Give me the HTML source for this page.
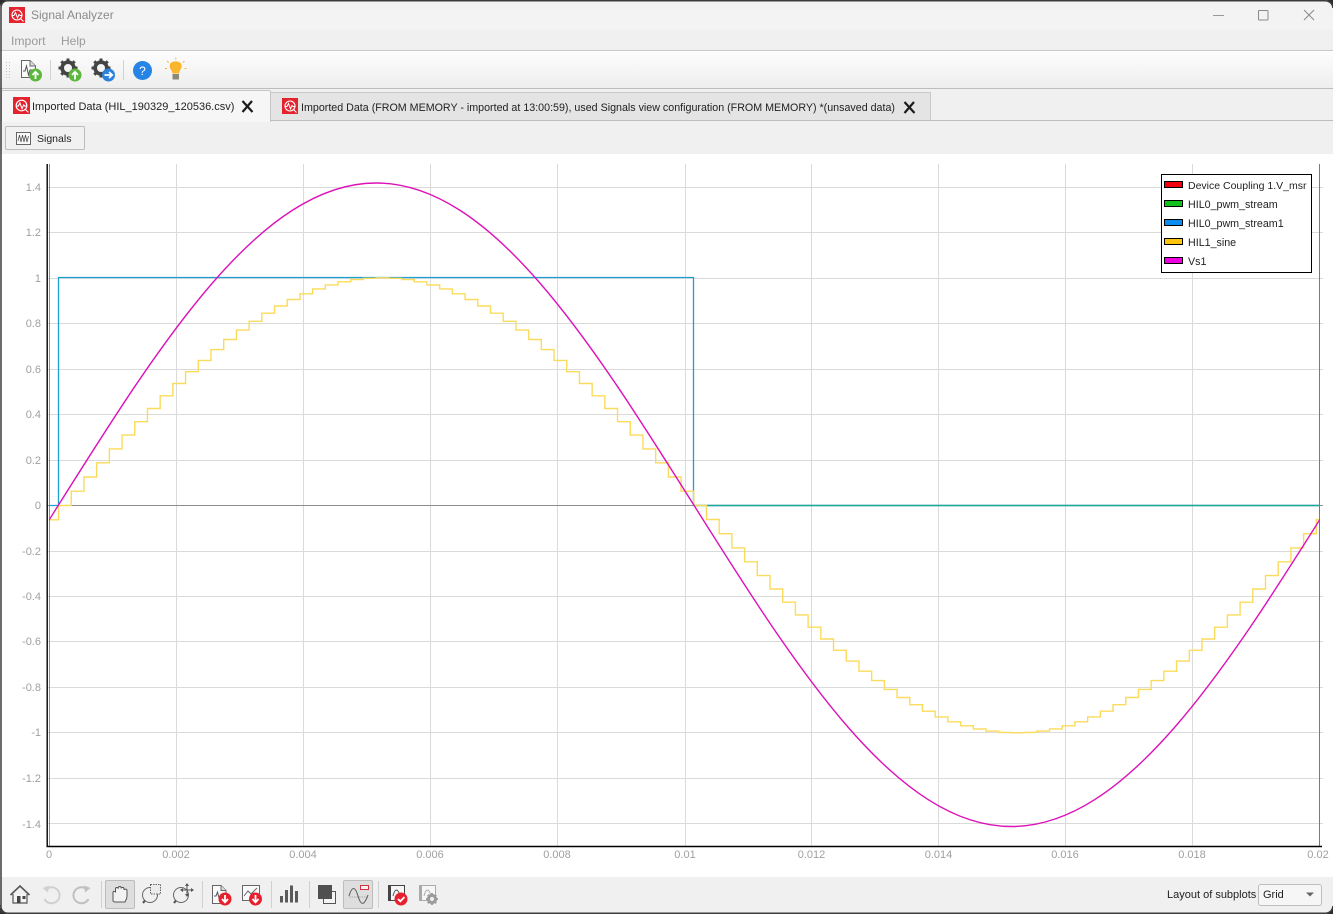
<!DOCTYPE html>
<html lang="en">
<head>
<meta charset="utf-8">
<title>Signal Analyzer</title>
<style>
html,body{margin:0;padding:0;background:#2b2b2b;}
body{width:1333px;height:914px;overflow:hidden;position:relative;font-family:"Liberation Sans",sans-serif;}
.a{position:absolute;white-space:nowrap;}
#win{position:absolute;left:0;top:0;width:1333px;height:914px;background:#f0f0f0;border-radius:8px;overflow:hidden;}
.t{font-size:11px;color:#222;line-height:14px;}
svg{position:absolute;overflow:visible;}
</style>
</head>
<body>
<div id="win">
  <!-- title bar -->
  <div class="a" style="left:0;top:0;width:1333px;height:30px;background:#f3f3f3"></div>
  <svg style="left:9px;top:7px" width="16" height="16" viewBox="0 0 16 16"><rect width="16" height="16" fill="#e3242f"/><circle cx="8" cy="8" r="5" fill="none" stroke="#fff" stroke-width="1.1"/><path d="M2.5 8.5H5L6.5 5.5 8.5 11 10 7.5 11 8.5H13.5M11.5 11.5L14.5 14.5" fill="none" stroke="#fff" stroke-width="1"/></svg>
  <div class="a" style="left:31px;top:8px;font-size:12px;line-height:15px;color:#8a8a8a">Signal Analyzer</div>
  <svg style="left:1200px;top:0" width="133" height="30" viewBox="0 0 133 30"><path d="M13 15.5H24" stroke="#999" fill="none"/><rect x="58.5" y="10.5" width="9.5" height="9.5" rx="1" fill="none" stroke="#888"/><path d="M104 10L114 20M114 10L104 20" stroke="#888" fill="none"/></svg>
  <!-- menu -->
  <div class="a" style="left:0;top:30px;width:1333px;height:20px;background:#f0f0f0;border-bottom:1px solid #c9c9c9"></div>
  <div class="a" style="left:11px;top:34px;font-size:12.2px;line-height:14px;color:#9a9a9a">Import</div>
  <div class="a" style="left:61px;top:34px;font-size:12px;line-height:14px;color:#9a9a9a">Help</div>
  <!-- toolbar -->
  <div class="a" style="left:0;top:51px;width:1333px;height:37px;background:linear-gradient(#fdfdfd,#eeeeee);border-bottom:1px solid #bdbdbd"></div>
  <svg style="left:0;top:51px" width="200" height="37" viewBox="0 51 200 37">
    <g fill="#c4c4c4"><rect x="6" y="62" width="1" height="1"/><rect x="9" y="62" width="1" height="1"/><rect x="6" y="65" width="1" height="1"/><rect x="9" y="65" width="1" height="1"/><rect x="6" y="68" width="1" height="1"/><rect x="9" y="68" width="1" height="1"/><rect x="6" y="71" width="1" height="1"/><rect x="9" y="71" width="1" height="1"/><rect x="6" y="74" width="1" height="1"/><rect x="9" y="74" width="1" height="1"/><rect x="6" y="77" width="1" height="1"/><rect x="9" y="77" width="1" height="1"/></g>
    <path d="M21.5 60.5H30L35.5 66V77.5H21.5Z" fill="#fafafa" stroke="#666"/>
    <path d="M30 60.5V66H35.5" fill="#ddd" stroke="#666"/>
    <path d="M23 71H25L26.5 66 28.5 75 30 70H32" fill="none" stroke="#555"/>
    <circle cx="35.5" cy="75" r="6.5" fill="#5cb83c"/><path d="M35.5 79V72M32.5 75L35.5 71.8 38.5 75" fill="none" stroke="#fff" stroke-width="1.8"/>
    <rect x="50" y="60" width="1" height="20" fill="#d2d2d2"/>
    <circle cx="68" cy="68" r="6" fill="none" stroke="#444" stroke-width="3.4"/><path d="M68 58.5V77.5M58.5 68H77.5M61.3 61.3L74.7 74.7M74.7 61.3L61.3 74.7" stroke="#444" stroke-width="3"/><circle cx="68" cy="68" r="4" fill="#f5f5f5"/>
    <circle cx="75" cy="75" r="6.5" fill="#5cb83c"/><path d="M75 79.5V72M72 75L75 71.8 78 75" fill="none" stroke="#fff" stroke-width="1.8"/>
    <circle cx="101" cy="68" r="6" fill="none" stroke="#444" stroke-width="3.4"/><path d="M101 58.5V77.5M91.5 68H110.5M94.3 61.3L107.7 74.7M107.7 61.3L94.3 74.7" stroke="#444" stroke-width="3"/><circle cx="101" cy="68" r="4" fill="#f5f5f5"/>
    <circle cx="108.5" cy="75" r="6.5" fill="#2a82dc"/><path d="M104.5 75H112M109 72L112.2 75 109 78" fill="none" stroke="#fff" stroke-width="1.8"/>
    <rect x="123" y="60" width="1" height="20" fill="#d2d2d2"/>
    <circle cx="142.5" cy="70.5" r="9.5" fill="#2584e4"/>
    <text x="142.5" y="75" font-family="Liberation Sans" font-size="12" fill="#fff" text-anchor="middle">?</text>
    <path d="M170 64C172 60.5 180 60.5 181.5 64.5 182.5 68 179.5 70 179 73.5H172.5C172 70 168.5 68 170 64Z" fill="#f9b62c"/>
    <rect x="172.5" y="74" width="6.5" height="5.5" fill="#8a8a7a"/>
    <path d="M175.8 57.5V59.5M167 61L168.8 62.5M184.5 61L182.8 62.5M165 68.5H167M186.5 68.5H184.5" stroke="#f9b62c" fill="none"/>
  </svg>
  <!-- tabs -->
  <div class="a" style="left:0;top:89px;width:1333px;height:31px;background:#f0f0f0;border-bottom:1px solid #bdbdbd"></div>
  <div class="a" style="left:270px;top:92px;width:661px;height:28px;background:#e4e4e4;border:1px solid #c8c8c8;border-bottom:none;box-sizing:border-box"></div>
  <div class="a" style="left:1px;top:90px;width:270px;height:32px;background:#f6f6f6;border:1px solid #c6c6c6;border-bottom:none;border-radius:2px 2px 0 0;box-sizing:border-box"></div>
  <svg style="left:13px;top:97px" width="17" height="17" viewBox="0 0 16 16"><rect width="16" height="16" fill="#e3242f"/><circle cx="8" cy="8" r="5" fill="none" stroke="#fff" stroke-width="1.1"/><path d="M2.5 8.5H5L6.5 5.5 8.5 11 10 7.5 11 8.5H13.5M11.5 11.5L14.5 14.5" fill="none" stroke="#fff" stroke-width="1"/></svg>
  <div class="a t" style="left:32px;top:100px">Imported Data (HIL_190329_120536.csv)</div>
  <svg style="left:241px;top:100px" width="13" height="13" viewBox="0 0 13 13"><path d="M1.5 1L11.5 12M11 1L1.5 12" stroke="#1c1c1c" stroke-width="2.2" fill="none"/></svg>
  <svg style="left:282px;top:98px" width="16" height="16" viewBox="0 0 16 16"><rect width="16" height="16" fill="#e3242f"/><circle cx="8" cy="8" r="5" fill="none" stroke="#fff" stroke-width="1.1"/><path d="M2.5 8.5H5L6.5 5.5 8.5 11 10 7.5 11 8.5H13.5M11.5 11.5L14.5 14.5" fill="none" stroke="#fff" stroke-width="1"/></svg>
  <div class="a t" style="left:301px;top:101px;font-size:10.7px">Imported Data (FROM MEMORY - imported at 13:00:59), used Signals view configuration (FROM MEMORY) *(unsaved data)</div>
  <svg style="left:903px;top:101px" width="13" height="13" viewBox="0 0 13 13"><path d="M1.5 1L11.5 12M11 1L1.5 12" stroke="#1c1c1c" stroke-width="2.2" fill="none"/></svg>
  <!-- signals button -->
  <div class="a" style="left:5px;top:126px;width:80px;height:24px;background:#f1f1f1;border:1px solid #bcbcbc;border-radius:2px;box-sizing:border-box"></div>
  <svg style="left:16px;top:132px" width="15" height="13" viewBox="0 0 15 13"><rect x=".5" y=".5" width="14" height="12" fill="#fafafa" stroke="#666"/><path d="M2 9L3.5 3 5 10 6.5 3 8 10 9.5 3 11 10 12.5 4" fill="none" stroke="#555" stroke-width=".8"/></svg>
  <div class="a t" style="left:37px;top:132px;font-size:10.5px">Signals</div>
  <!-- plot -->
  <div class="a" style="left:0;top:154px;width:1333px;height:723px;background:#fff"></div>
  <svg style="left:0;top:0" width="1333" height="914" viewBox="0 0 1333 914">
    <defs><clipPath id="c"><rect x="49" y="160" width="1271" height="686"/></clipPath></defs>
    <g stroke="#dadada" stroke-width="1" fill="none">
      <path d="M47 187.5H1323M47 232.5H1323M47 278.5H1323M47 323.5H1323M47 369.5H1323M47 414.5H1323M47 460.5H1323M47 551.5H1323M47 596.5H1323M47 641.5H1323M47 687.5H1323M47 732.5H1323M47 778.5H1323M47 823.5H1323"/>
      <path d="M176.5 164V846M303.5 164V846M430.5 164V846M557.5 164V846M685.5 164V846M811.5 164V846M938.5 164V846M1065.5 164V846M1192.5 164V846"/>
    </g>
    <path d="M47 505.5H1323" stroke="#8e8e8e" fill="none"/>
    <path d="M49.5 164V846" stroke="#8e8e8e" fill="none"/>
    <path d="M1319.5 164V846" stroke="#7a7a7a" fill="none"/>
    <g clip-path="url(#c)" fill="none">
      <path d="M49 505.5H58.5V277.5H693.5V505.5H1320" stroke="#1e9fd0" stroke-width="1.3"/>
      <path d="M693.5 505.5H1320" stroke="#1fa69a" stroke-width="1.6"/>
      <path d="M49 519.8H58.53V505.5h12.705V491.2h12.705V477h12.705V462.8h12.705V448.9h12.705V435.1h12.705V421.7h12.705V408.5h12.705V395.8h12.705V383.5h12.705V371.7h12.705V360.4h12.705V349.6h12.705V339.5h12.705V330.1h12.705V321.3h12.705V313.2h12.705V306h12.705V299.5h12.705V293.8h12.705V288.9h12.705V284.9h12.705V281.8h12.705V279.6h12.705V278.3h12.705V277.8h12.705V278.3h12.705V279.6h12.705V281.8h12.705V284.9h12.705V288.9h12.705V293.8h12.705V299.5h12.705V306h12.705V313.2h12.705V321.3h12.705V330.1h12.705V339.5h12.705V349.6h12.705V360.4h12.705V371.7h12.705V383.5h12.705V395.8h12.705V408.5h12.705V421.7h12.705V435.1h12.705V448.9h12.705V462.8h12.705V477h12.705V491.2h12.705V505.5h12.705V519.5h12.705V533.7h12.705V547.9h12.705V561.8h12.705V575.6h12.705V589h12.705V602.2h12.705V614.9h12.705V627.2h12.705V639h12.705V650.3h12.705V661.1h12.705V671.2h12.705V680.6h12.705V689.4h12.705V697.5h12.705V704.7h12.705V711.2h12.705V716.9h12.705V721.8h12.705V725.8h12.705V728.9h12.705V731.1h12.705V732.4h12.705V732.8h12.705V732.4h12.705V731.1h12.705V728.9h12.705V725.8h12.705V721.8h12.705V716.9h12.705V711.2h12.705V704.7h12.705V697.5h12.705V689.4h12.705V680.6h12.705V671.2h12.705V661.1h12.705V650.3h12.705V639h12.705V627.2h12.705V614.9h12.705V602.2h12.705V589h12.705V575.6h12.705V561.8h12.705V547.9h12.705V533.7h12.705V519.5h12.705" stroke="#fbdb5c" stroke-width="1.4"/>
      <path d="M-259.1 826.5c114.95 0 214.04-156.8 317.63-321.5c103.59-164.7 202.68-322 317.63-322c114.95 0 214.04 157.3 317.63 322c103.59 164.7 202.68 321.5 317.63 321.5c114.95 0 214.04-156.8 317.63-321.5" stroke="#dc12b8" stroke-width="1.4"/>
    </g>
    <path d="M47.2 164V846.5H1322" fill="none" stroke="#000" stroke-width="1.4"/>
    <g font-family="Liberation Sans" font-size="11" fill="#a0a0a0" text-anchor="end">
      <text x="41" y="191">1.4</text><text x="41" y="236">1.2</text><text x="41" y="282">1</text><text x="41" y="327">0.8</text><text x="41" y="373">0.6</text><text x="41" y="418">0.4</text><text x="41" y="464">0.2</text><text x="41" y="509">0</text><text x="41" y="555">-0.2</text><text x="41" y="600">-0.4</text><text x="41" y="645">-0.6</text><text x="41" y="691">-0.8</text><text x="41" y="736">-1</text><text x="41" y="782">-1.2</text><text x="41" y="828">-1.4</text>
    </g>
    <g font-family="Liberation Sans" font-size="11" fill="#a0a0a0" text-anchor="middle">
      <text x="49" y="858">0</text><text x="176" y="858">0.002</text><text x="303" y="858">0.004</text><text x="430" y="858">0.006</text><text x="557" y="858">0.008</text><text x="685" y="858">0.01</text><text x="811.5" y="858">0.012</text><text x="938.5" y="858">0.014</text><text x="1065" y="858">0.016</text><text x="1192" y="858">0.018</text><text x="1318" y="858">0.02</text>
    </g>
    <!-- legend -->
    <rect x="1161.5" y="174.5" width="150" height="98" fill="#fff" stroke="#000"/>
    <g stroke="#000" stroke-width="1">
      <rect x="1164.5" y="181.5" width="18" height="6" fill="#f2000e"/>
      <rect x="1164.5" y="200.5" width="18" height="6" fill="#12c01e"/>
      <rect x="1164.5" y="219.5" width="18" height="6" fill="#0a8cf0"/>
      <rect x="1164.5" y="238.5" width="18" height="6" fill="#fdc40c"/>
      <rect x="1164.5" y="257.5" width="18" height="6" fill="#f000e0"/>
    </g>
    <g font-family="Liberation Sans" font-size="10.7" fill="#222">
      <text x="1188" y="189" font-size="10.5">Device Coupling 1.V_msr</text>
      <text x="1188" y="208">HIL0_pwm_stream</text>
      <text x="1188" y="227">HIL0_pwm_stream1</text>
      <text x="1188" y="246">HIL1_sine</text>
      <text x="1188" y="265">Vs1</text>
    </g>
  </svg>
  <!-- bottom toolbar -->
  <div class="a" style="left:105px;top:880px;width:30px;height:29px;background:#dedede;border:1px solid #bdbdbd;border-radius:2px;box-sizing:border-box"></div>
  <div class="a" style="left:343px;top:880px;width:30px;height:29px;background:#dedede;border:1px solid #bdbdbd;border-radius:2px;box-sizing:border-box"></div>
  <svg style="left:0;top:877px" width="450" height="37" viewBox="0 877 450 37">
    <!-- home -->
    <path d="M10.5 895L20 886 29.5 895" fill="none" stroke="#555" stroke-width="1.6"/>
    <path d="M13 894V903H27V894" fill="#f4f4f4" stroke="#555" stroke-width="1.2"/>
    <rect x="17" y="896" width="3.5" height="7" fill="#444"/><rect x="22.5" y="896" width="3" height="3" fill="#444"/>
    <!-- undo/redo -->
    <path d="M46 889.5A8 8 0 1 1 44.5 899" fill="none" stroke="#d0d0d0" stroke-width="2"/><path d="M42.5 888L49 885.5 48 892.5Z" fill="#d0d0d0"/>
    <path d="M87 889.5A8 8 0 1 0 88.5 899" fill="none" stroke="#c0c0c0" stroke-width="2"/><path d="M90.5 888L84 885.5 85 892.5Z" fill="#c0c0c0"/>
    <rect x="101" y="881" width="1" height="27" fill="#d0d0d0"/>
    <!-- hand -->
    <path d="M113 901V892.5C113 891 115.5 891 115.5 892.5V888.8C115.5 887 118.3 887 118.3 888.8V887.8C118.3 886 121.2 886 121.2 887.8V888.5C121.2 887 124 887 124 888.8V890C124 888.8 127 888.8 127 890.5V896C127 899 125.5 900.5 125 902H114.5Z" fill="#f2f2f2" stroke="#555" stroke-width="1"/>
    <!-- zoom rect -->
    <circle cx="150" cy="895" r="7.5" fill="none" stroke="#666" stroke-width="1"/><path d="M145 900.5L143 903" stroke="#555" stroke-width="2.2"/>
    <rect x="150.5" y="884.5" width="10" height="9.5" fill="#ececec" stroke="#666" stroke-dasharray="1.5 1"/>
    <!-- zoom pan -->
    <circle cx="181" cy="895" r="7.5" fill="none" stroke="#666" stroke-width="1"/><path d="M176 900.5L174 903" stroke="#555" stroke-width="2.2"/>
    <path d="M187 884V896M181 890H193" stroke="#555" stroke-width="1"/><path d="M187 883L185 886H189ZM187 897L185 894H189ZM180 890L183 888V892ZM194 890L191 888V892Z" fill="#555"/>
    <rect x="202" y="881" width="1" height="27" fill="#d0d0d0"/>
    <!-- export 1 -->
    <path d="M212.5 885.5H221L226 890.5V903.5H212.5Z" fill="#fafafa" stroke="#666"/><path d="M221 885.5V890.5H226" fill="#ddd" stroke="#666"/>
    <path d="M214 896H216L217.5 892 219.5 900 221 895H223" fill="none" stroke="#555"/>
    <circle cx="225" cy="899" r="6.5" fill="#e8202e"/><path d="M225 895V902M222 899L225 902.3 228 899" fill="none" stroke="#fff" stroke-width="1.8"/>
    <!-- export 2 -->
    <rect x="242.5" y="885.5" width="17" height="15" fill="#fafafa" stroke="#666"/><path d="M244 896L248 891 251 894 257 888" fill="none" stroke="#666"/>
    <circle cx="255.5" cy="899" r="6.5" fill="#e8202e"/><path d="M255.5 895V902M252.5 899L255.5 902.3 258.5 899" fill="none" stroke="#fff" stroke-width="1.8"/>
    <rect x="271" y="881" width="1" height="27" fill="#d0d0d0"/>
    <!-- bars -->
    <g fill="#5a5a5a"><rect x="280" y="896" width="3" height="6.5"/><rect x="285" y="890" width="3" height="12.5"/><rect x="290" y="885.5" width="3" height="17"/><rect x="295" y="891" width="3" height="11.5"/></g>
    <rect x="309" y="881" width="1" height="27" fill="#d0d0d0"/>
    <!-- overlap -->
    <rect x="323.5" y="891.5" width="12" height="12" fill="#f4f4f4" stroke="#555"/>
    <rect x="318" y="885" width="14" height="14" fill="#505050"/>
    <!-- wave -->
    <path d="M349 897H369" stroke="#aaa" stroke-dasharray="1.5 1" fill="none"/>
    <path d="M349 896C352 886 355 886 358 896 361 906 364 906 368 895" fill="none" stroke="#666" stroke-width="1.1"/>
    <rect x="360.5" y="885.5" width="8" height="4" fill="#f4f4f4" stroke="#d8303a"/>
    <rect x="378" y="881" width="1" height="27" fill="#d0d0d0"/>
    <!-- check -->
    <rect x="388.5" y="885.5" width="16" height="15" fill="#f6f6f6" stroke="#444"/><rect x="388" y="885" width="3" height="16" fill="#444"/>
    <path d="M393 896C395 888 398 888 400 896" fill="none" stroke="#555"/>
    <circle cx="401" cy="899" r="6.5" fill="#e8202e"/><path d="M398 899L400.3 901.3 404.5 897" fill="none" stroke="#fff" stroke-width="1.8"/>
    <!-- settings -->
    <rect x="419.5" y="885.5" width="16" height="15" fill="#f6f6f6" stroke="#aaa"/><rect x="419" y="885" width="3" height="16" fill="#aaa"/>
    <path d="M424 896C426 888 429 888 431 896" fill="none" stroke="#aaa"/>
    <circle cx="432" cy="899" r="3.8" fill="none" stroke="#9a9a9a" stroke-width="2.6"/><path d="M432 893V905M426 899H438M427.8 894.8L436.2 903.2M436.2 894.8L427.8 903.2" stroke="#9a9a9a" stroke-width="1.8"/><circle cx="432" cy="899" r="2" fill="#f0f0f0"/>
  </svg>
  <div class="a" style="left:1167px;top:888px;font-size:11px;line-height:14px;color:#222">Layout of subplots</div>
  <div class="a" style="left:1258px;top:884px;width:64px;height:22px;background:#f6f6f6;border:1px solid #bdbdbd;border-radius:3px;box-sizing:border-box"></div>
  <div class="a" style="left:1263px;top:888px;font-size:11px;line-height:14px;color:#222">Grid</div>
  <svg style="left:1305px;top:892px" width="11" height="6" viewBox="0 0 11 6"><path d="M1 0.5H9L5 4.5Z" fill="#666"/></svg>
</div>
<!-- window frame -->
<svg style="left:0;top:0;pointer-events:none" width="1333" height="914" viewBox="0 0 1333 914"><path d="M1 913V8Q1 1 8 .7H1325Q1332 1 1333 8M0.7 905Q1 913 8 913.3H1325Q1332 913 1333 906" fill="none" stroke="#3c3c3c" stroke-width="1.5"/></svg>
</body>
</html>
